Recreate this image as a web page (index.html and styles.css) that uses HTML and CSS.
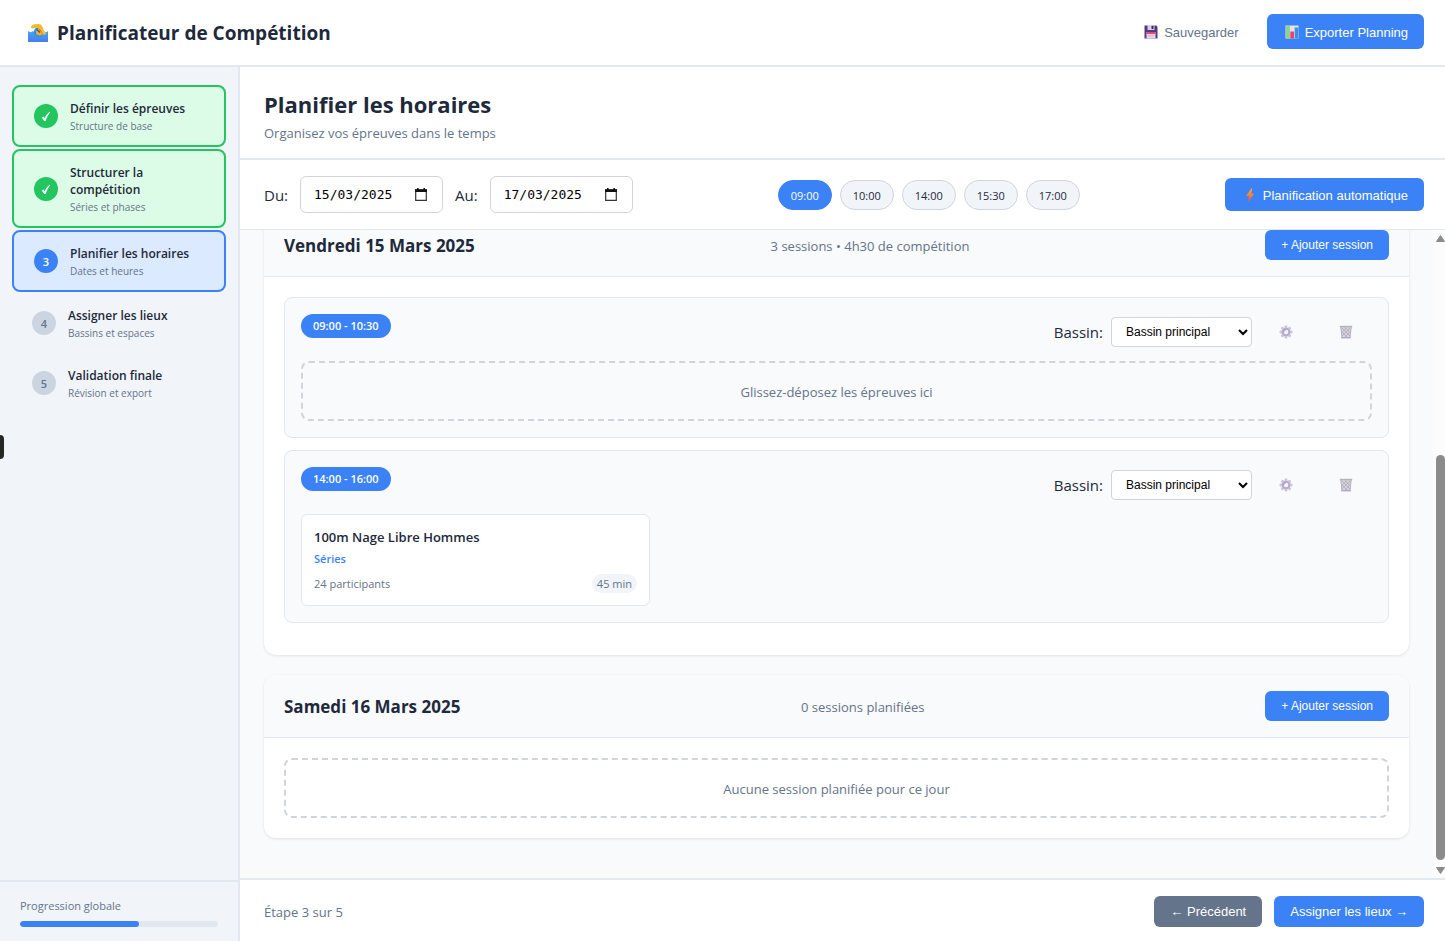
FILE: index.html
```html
<!DOCTYPE html>
<html lang="fr">
<head>
<meta charset="utf-8">
<title>Planificateur de Compétition</title>
<link rel="stylesheet" href="styles.css">
</head>
<body>
<svg class="defs" aria-hidden="true">
  <defs>
    <linearGradient id="water" x1="0" y1="0" x2="0" y2="1"><stop offset="0" stop-color="#3fa9f5"/><stop offset="1" stop-color="#4a7be8"/></linearGradient>
    <linearGradient id="skin" x1="0" y1="0" x2="1" y2="1"><stop offset="0" stop-color="#f0b429"/><stop offset="1" stop-color="#ffc42e"/></linearGradient>
    <linearGradient id="flash" x1="0" y1="0" x2="0" y2="1"><stop offset="0" stop-color="#ffb02e"/><stop offset="1" stop-color="#f0504a"/></linearGradient>
    <symbol id="gear" viewBox="0 0 14 14">
      <g fill="#cdc4de"><rect x="5.600" y="0.500" width="2.800" height="13" rx="1"/><rect x="5.600" y="0.500" width="2.800" height="13" rx="1" transform="rotate(45 7 7)"/><rect x="5.600" y="0.500" width="2.800" height="13" rx="1" transform="rotate(90 7 7)"/><rect x="5.600" y="0.500" width="2.800" height="13" rx="1" transform="rotate(135 7 7)"/></g>
      <circle cx="7" cy="7" r="3.300" fill="#f4f5f9" stroke="#b8abcc" stroke-width="2"/><path d="M4.800 7.500A2.200 2.200 0 0 1 7 4.800" fill="none" stroke="#928ca0" stroke-width=".9"/>
    </symbol>
    <symbol id="bin" viewBox="0 0 14 14">
      <path d="M1.400 1.600h11.200l-1.200 10.800H2.600z" fill="#d8d5de"/>
      <path d="M3 3l7.800 8M6 2.500l5 5M3.200 7l4.500 5M11 3l-7.800 8M8 2.500l-5 5M10.800 7l-4.500 5M1.900 2l1 10M12.100 2l-1 10" stroke="#aaa6b3" stroke-width=".8"/>
      <path d="M.8.800h12.400v1.500H.8z" fill="#b5b2ba"/><path d="M2.200 12h9.600v1.400H2.200z" fill="#b3a3cb"/>
    </symbol>
    <symbol id="calendar" viewBox="0 0 12 13"><path d="M0.700 2h10.600v10.300H.700z" fill="none" stroke="#333" stroke-width="1.200"/><path d="M0 1.300h12V4H0zM2 0h1.600v2H2zM8.400 0H10v2H8.400z" fill="#111"/></symbol>
    <symbol id="check" viewBox="0 0 12 12"><path d="M1.800 7.600L3.400 6.500l1.300 1.700C5.800 5.600 7.500 3.300 9.600 1.700l.7.400C8.300 4.600 6.900 7.600 5.600 11H4.200z" fill="#fff"/></symbol>
  </defs>
</svg>
<div class="app">
  <header class="topbar">
    <h1 class="brand">
      <svg class="brand-icon" viewBox="0 0 20 18" aria-hidden="true">
        <path d="M0 7c2 1.500 3.500 1.500 5 0 2 2 4 2 5.500.500C12 9 14 9.500 16 7.500c1.500 1.200 2.600.800 4-.500v11H0z" fill="url(#water)"/>
        <circle cx="10.500" cy="7.800" r="4.600" fill="#2e8ee8"/><circle cx="11.300" cy="8.200" r="3.300" fill="#f2ac2c"/>
        <path d="M8.600 5.500l3.500 2.800" stroke="#46578f" stroke-width="1.500"/>
        <path d="M3 2.800C4 .6 6.500 0 10 0c3 0 4 1.500 5 4 .7 2 1.700 4.300 3.300 5.600-1 1.300-3.300 1.300-4.800-.600L11.200 5C9.400 3 7 3.800 4.600 4.400 3.300 4.600 2.700 3.800 3 2.800z" fill="url(#skin)"/>
        <path d="M11.500 5l3 4.500" stroke="#9d6a39" stroke-width=".7"/>
      </svg>
      <span class="brand-name">Planificateur de Compétition</span>
    </h1>
    <div class="actions">
      <button class="btn btn-ghost" type="button">
        <svg class="emoji" viewBox="0 0 14 14" aria-hidden="true"><path d="M.5.500h12L13.500 2v11.500H.5z" fill="#533a7d"/><path d="M3.500 0h7v5h-7z" fill="#d8cfe6"/><path d="M7.500.8h2V4h-2z" fill="#3b2a60"/><path d="M2.500 7h9v6.500h-9z" fill="#f4d7e6"/><path d="M2.500 7h9v2h-9z" fill="#e0457b"/><path d="M3.500 10.500h7v.800h-7z" fill="#b9a0c8"/></svg>
        Sauvegarder
      </button>
      <button class="btn btn-primary" type="button">
        <svg class="emoji" viewBox="0 0 14 14" aria-hidden="true"><path d="M.5.500h13v13H.5z" fill="#dfe3ea"/><path d="M1 1h4v12.500H1z" fill="#8fd48a"/><path d="M5.300 6.500h3.700v7H5.300z" fill="#ee3f6d"/><path d="M9.700 2.500h3.600v11H9.700z" fill="#3f8fe0"/></svg>
        Exporter Planning
      </button>
    </div>
  </header>

  <div class="body">
    <aside class="sidebar">
      <nav class="steps">
        <a class="step done" href="#epreuves"><span class="num"><svg class="tick" aria-hidden="true"><use href="#check"/></svg></span><span class="step-text"><span class="step-title">Définir les épreuves</span><span class="step-sub">Structure de base</span></span></a>
        <a class="step done" href="#structure"><span class="num"><svg class="tick" aria-hidden="true"><use href="#check"/></svg></span><span class="step-text"><span class="step-title">Structurer la compétition</span><span class="step-sub">Séries et phases</span></span></a>
        <a class="step current" href="#horaires"><span class="num">3</span><span class="step-text"><span class="step-title">Planifier les horaires</span><span class="step-sub">Dates et heures</span></span></a>
        <a class="step" href="#lieux"><span class="num">4</span><span class="step-text"><span class="step-title">Assigner les lieux</span><span class="step-sub">Bassins et espaces</span></span></a>
        <a class="step" href="#validation"><span class="num">5</span><span class="step-text"><span class="step-title">Validation finale</span><span class="step-sub">Révision et export</span></span></a>
      </nav>
      <div class="progress">
        <span class="progress-label">Progression globale</span>
        <div class="track"><div class="fill" style="width:60%"></div></div>
      </div>
    </aside>

    <main class="main">
      <div class="page-head">
        <h2 class="page-title">Planifier les horaires</h2>
        <p class="page-sub">Organisez vos épreuves dans le temps</p>
      </div>

      <div class="toolbar">
        <div class="dates">
          <label for="from">Du:</label>
          <div class="date-box"><input id="from" class="date-input" type="text" value="15/03/2025"><svg class="cal" aria-hidden="true"><use href="#calendar"/></svg></div>
          <label for="to">Au:</label>
          <div class="date-box"><input id="to" class="date-input" type="text" value="17/03/2025"><svg class="cal" aria-hidden="true"><use href="#calendar"/></svg></div>
        </div>
        <div class="chips">
          <button class="chip active" type="button">09:00</button>
          <button class="chip" type="button">10:00</button>
          <button class="chip" type="button">14:00</button>
          <button class="chip" type="button">15:30</button>
          <button class="chip" type="button">17:00</button>
        </div>
        <button class="btn btn-primary btn-auto" type="button">
          <svg class="emoji" viewBox="0 0 14 14" aria-hidden="true"><path d="M8.500.300L3.400 7.400c-.3.500-.1.900.4.900h2.300L5 13.300c0 .5.300.6.600.2l5-7c.3-.5.100-.9-.4-.9H8.200L9.100.700C9.200.200 8.800 0 8.500.300z" fill="url(#flash)"/></svg>
          Planification automatique
        </button>
      </div>

      <div class="schedule">
        <div class="days">
          <section class="day">
            <div class="day-head">
              <h3 class="day-title">Vendredi 15 Mars 2025</h3>
              <span class="day-info">3 sessions • 4h30 de compétition</span>
              <button class="btn btn-primary btn-small" type="button">+ Ajouter session</button>
            </div>
            <div class="day-body">
              <article class="session">
                <div class="session-head">
                  <span class="time">09:00 - 10:30</span>
                  <div class="session-tools">
                    <label for="pool1">Bassin:</label>
                    <select id="pool1" class="pool"><option>Bassin principal</option></select>
                    <button class="btn btn-icon" type="button" aria-label="Paramètres"><svg class="emoji" aria-hidden="true"><use href="#gear"/></svg></button>
                    <button class="btn btn-icon" type="button" aria-label="Supprimer"><svg class="emoji" aria-hidden="true"><use href="#bin"/></svg></button>
                  </div>
                </div>
                <div class="drop">Glissez-déposez les épreuves ici</div>
              </article>
              <article class="session">
                <div class="session-head">
                  <span class="time">14:00 - 16:00</span>
                  <div class="session-tools">
                    <label for="pool2">Bassin:</label>
                    <select id="pool2" class="pool"><option>Bassin principal</option></select>
                    <button class="btn btn-icon" type="button" aria-label="Paramètres"><svg class="emoji" aria-hidden="true"><use href="#gear"/></svg></button>
                    <button class="btn btn-icon" type="button" aria-label="Supprimer"><svg class="emoji" aria-hidden="true"><use href="#bin"/></svg></button>
                  </div>
                </div>
                <div class="events">
                  <div class="event">
                    <div class="event-name">100m Nage Libre Hommes</div>
                    <div class="event-phase">Séries</div>
                    <div class="event-meta"><span>24 participants</span><span class="duration">45 min</span></div>
                  </div>
                </div>
              </article>
            </div>
          </section>
          <section class="day">
            <div class="day-head">
              <h3 class="day-title">Samedi 16 Mars 2025</h3>
              <span class="day-info">0 sessions planifiées</span>
              <button class="btn btn-primary btn-small" type="button">+ Ajouter session</button>
            </div>
            <div class="day-body">
              <div class="drop">Aucune session planifiée pour ce jour</div>
            </div>
          </section>
        </div>
        <div class="scrollbar" aria-hidden="true">
          <svg class="arrow" viewBox="0 0 9 7"><path d="M4.500 0.500L8.500 6.500H.5z" fill="#8b8b8b" stroke="#8b8b8b" stroke-linejoin="round"/></svg>
          <div class="rail"><div class="thumb"></div></div>
          <svg class="arrow" viewBox="0 0 9 7"><path d="M4.500 6.500L8.500.500H.5z" fill="#8b8b8b" stroke="#8b8b8b" stroke-linejoin="round"/></svg>
        </div>
      </div>

      <footer class="footer">
        <span class="footer-step">Étape 3 sur 5</span>
        <div class="footer-actions">
          <button class="btn btn-secondary btn-nav" type="button">← Précédent</button>
          <button class="btn btn-primary btn-nav" type="button">Assigner les lieux →</button>
        </div>
      </footer>
    </main>
  </div>
  <div class="side-handle"></div>
</div>
</body>
</html>
```
FILE: styles.css
```css
* { box-sizing: border-box; }
body { margin: 0; font-family: "Open Sans", "Noto Sans", sans-serif; font-size: 15px; color: #1e293b; background: #f8fafc; }
h1, h2, h3, p { margin: 0; }
button, select { font-family: "Liberation Sans", Arial, sans-serif; }
.defs { position: absolute; width: 0; height: 0; }
.app { height: 100vh; display: flex; flex-direction: column; position: relative; overflow: hidden; }

.topbar { display: flex; align-items: center; justify-content: space-between; padding: 14px 21px 16px 28px; background: #fff; border-bottom: 2px solid #e2e8f0; }
.brand { display: flex; align-items: center; gap: 9px; font-size: 19px; line-height: 27px; font-weight: 700; }
.brand-icon { width: 20px; height: 18px; margin-top: 2px; }
.brand-name { padding-top: 4px; }
.actions { display: flex; gap: 12px; }

.btn { display: inline-flex; align-items: center; justify-content: center; gap: 4px; height: 35px; padding: 1px 16px 0; border: 0; border-radius: 6px; font-size: 13px; font-weight: 400; white-space: nowrap; cursor: pointer; }
.btn-ghost { background: none; color: #64748b; }
.btn-primary { background: #3b82f6; color: #fff; }
.btn-secondary { background: #64748b; color: #fff; }
.btn-auto { height: 33px; }
.btn-small { height: 30px; padding-top: 0; font-size: 12px; }
.btn-nav { height: 31px; padding-top: 0; }
.btn-icon { width: 52px; background: none; }
.emoji { width: 14px; height: 14px; margin: 0 2px; }

.body { flex: 1; min-height: 0; display: flex; }
.sidebar { width: 240px; flex: none; display: flex; flex-direction: column; justify-content: space-between; background: #f1f5f9; border-right: 2px solid #e2e8f0; }
.steps { display: flex; flex-direction: column; gap: 2px; padding: 18px 12px; }
.step { display: flex; align-items: center; gap: 12px; padding: 11px 20px; border-radius: 8px; color: #1e293b; text-decoration: none; }
.done { background: #dcfce7; border: 2px solid #22c55e; }
.current { background: #dbeafe; border: 2px solid #3b82f6; }
.num { width: 24px; height: 24px; flex: none; display: flex; align-items: center; justify-content: center; border-radius: 50%; background: #cbd5e1; color: #64748b; font-size: 11px; font-weight: 600; }
.done .num { background: #22c55e; }
.current .num { background: #3b82f6; color: #fff; }
.tick { width: 12px; height: 12px; }
.step-text { display: flex; flex-direction: column; gap: 2px; padding-top: 2px; }
.step-title { font-size: 12px; line-height: 17px; font-weight: 600; }
.step-sub { font-size: 10px; line-height: 15px; color: #64748b; }
.progress { padding: 16px 20px 14px; border-top: 2px solid #e2e8f0; display: flex; flex-direction: column; gap: 8px; }
.progress-label { font-size: 11px; line-height: 15px; color: #64748b; }
.track { height: 6px; border-radius: 3px; background: #e2e8f0; overflow: hidden; }
.fill { height: 100%; border-radius: 3px; background: #3b82f6; }

.main { flex: 1; min-width: 0; display: flex; flex-direction: column; }
.page-head { padding: 20px 24px 16px; background: #fff; border-bottom: 2px solid #e2e8f0; }
.page-title { font-size: 22px; line-height: 34px; font-weight: 700; }
.page-sub { margin-top: 4px; font-size: 13px; line-height: 17px; color: #64748b; }
.toolbar { display: flex; align-items: center; justify-content: space-between; padding: 16px 21px 16px 24px; background: #fff; border-bottom: 1px solid #e2e8f0; }
.dates { display: flex; align-items: center; gap: 12px; }
.date-box { width: 143px; height: 37px; display: flex; align-items: center; justify-content: space-between; padding: 0 15px 0 13px; border: 1px solid #d1d5db; border-radius: 6px; background: #fff; }
.date-input { width: 96px; padding: 0; border: 0; outline: 0; background: none; color: #000; font-family: "DejaVu Sans Mono", monospace; font-size: 13px; }
.cal { width: 12px; height: 13px; }
.chips { display: flex; gap: 8px; }
.chip { width: 54px; height: 30px; padding: 1px 0 0; border: 1px solid #d1d5db; border-radius: 15px; background: #f1f5f9; color: #1e293b; font-family: "Open Sans", "Noto Sans", sans-serif; font-size: 11px; }
.active { background: #3b82f6; border-color: #3b82f6; color: #fff; }

.schedule { flex: 1; min-height: 0; display: flex; }
.days { flex: 1; min-width: 0; display: flex; flex-direction: column; justify-content: flex-end; gap: 20px; padding: 0 24px 40px; overflow: hidden; }
.day { flex: none; background: #fff; border-radius: 12px; box-shadow: 0 1px 3px rgba(0, 0, 0, .1); overflow: hidden; }
.day-head { display: flex; align-items: center; justify-content: space-between; padding: 16px 20px; background: #f8fafc; border-bottom: 1px solid #e2e8f0; }
.day-title { padding-top: 2px; font-size: 17px; line-height: 28px; font-weight: 700; }
.day-info { padding-top: 2px; font-size: 13px; color: #64748b; }
.day-body { padding: 20px; }
.session { margin-bottom: 12px; padding: 16px; border: 1px solid #e2e8f0; border-radius: 8px; background: #f8fafc; }
.session-head { display: flex; align-items: flex-start; justify-content: space-between; margin-bottom: 12px; }
.time { padding: 0 12px; border-radius: 12px; background: #3b82f6; color: #fff; font-size: 11px; line-height: 24px; font-weight: 600; }
.session-tools { display: flex; align-items: center; gap: 8px; }
.session-tools .emoji { margin: 0; }
.pool { width: 141px; height: 30px; padding: 0 0 0 10px; border: 1px solid #d1d5db; border-radius: 4px; background: #fff; color: #000; font-size: 12px; }
.drop { height: 60px; display: flex; align-items: center; justify-content: center; padding-top: 2px; border: 2px dashed #d1d5db; border-radius: 8px; color: #64748b; font-size: 13px; }
.events { display: grid; grid-template-columns: repeat(3, 1fr); gap: 12px; }
.event { padding: 12px; border: 1px solid #e2e8f0; border-radius: 6px; background: #fff; }
.event-name { font-size: 13px; line-height: 20px; font-weight: 600; }
.event-phase { margin-top: 4px; font-size: 11px; line-height: 15px; font-weight: 600; color: #3b82f6; }
.event-meta { display: flex; align-items: center; justify-content: space-between; margin-top: 8px; font-size: 11px; line-height: 19px; color: #64748b; }
.duration { padding: 0 5px; border-radius: 10px; background: #f1f5f9; }

.scrollbar { width: 12px; flex: none; display: flex; flex-direction: column; align-items: flex-end; gap: 4px; padding: 5px 0 4px; background: #fcfcfc; }
.arrow { width: 9px; height: 7px; flex: none; }
.rail { width: 9px; flex: 1; display: flex; flex-direction: column; justify-content: flex-end; padding-bottom: 3px; }
.thumb { height: 66%; border-radius: 5px; background: #8b8b8b; }

.footer { display: flex; align-items: center; justify-content: space-between; padding: 16px 21px 14px 24px; background: #fff; border-top: 2px solid #e2e8f0; }
.footer-step { font-size: 13px; color: #64748b; }
.footer-actions { display: flex; gap: 12px; }
.side-handle { position: absolute; left: 0; top: 435px; width: 4px; height: 24px; border-radius: 0 4px 4px 0; background: #262626; }
```
